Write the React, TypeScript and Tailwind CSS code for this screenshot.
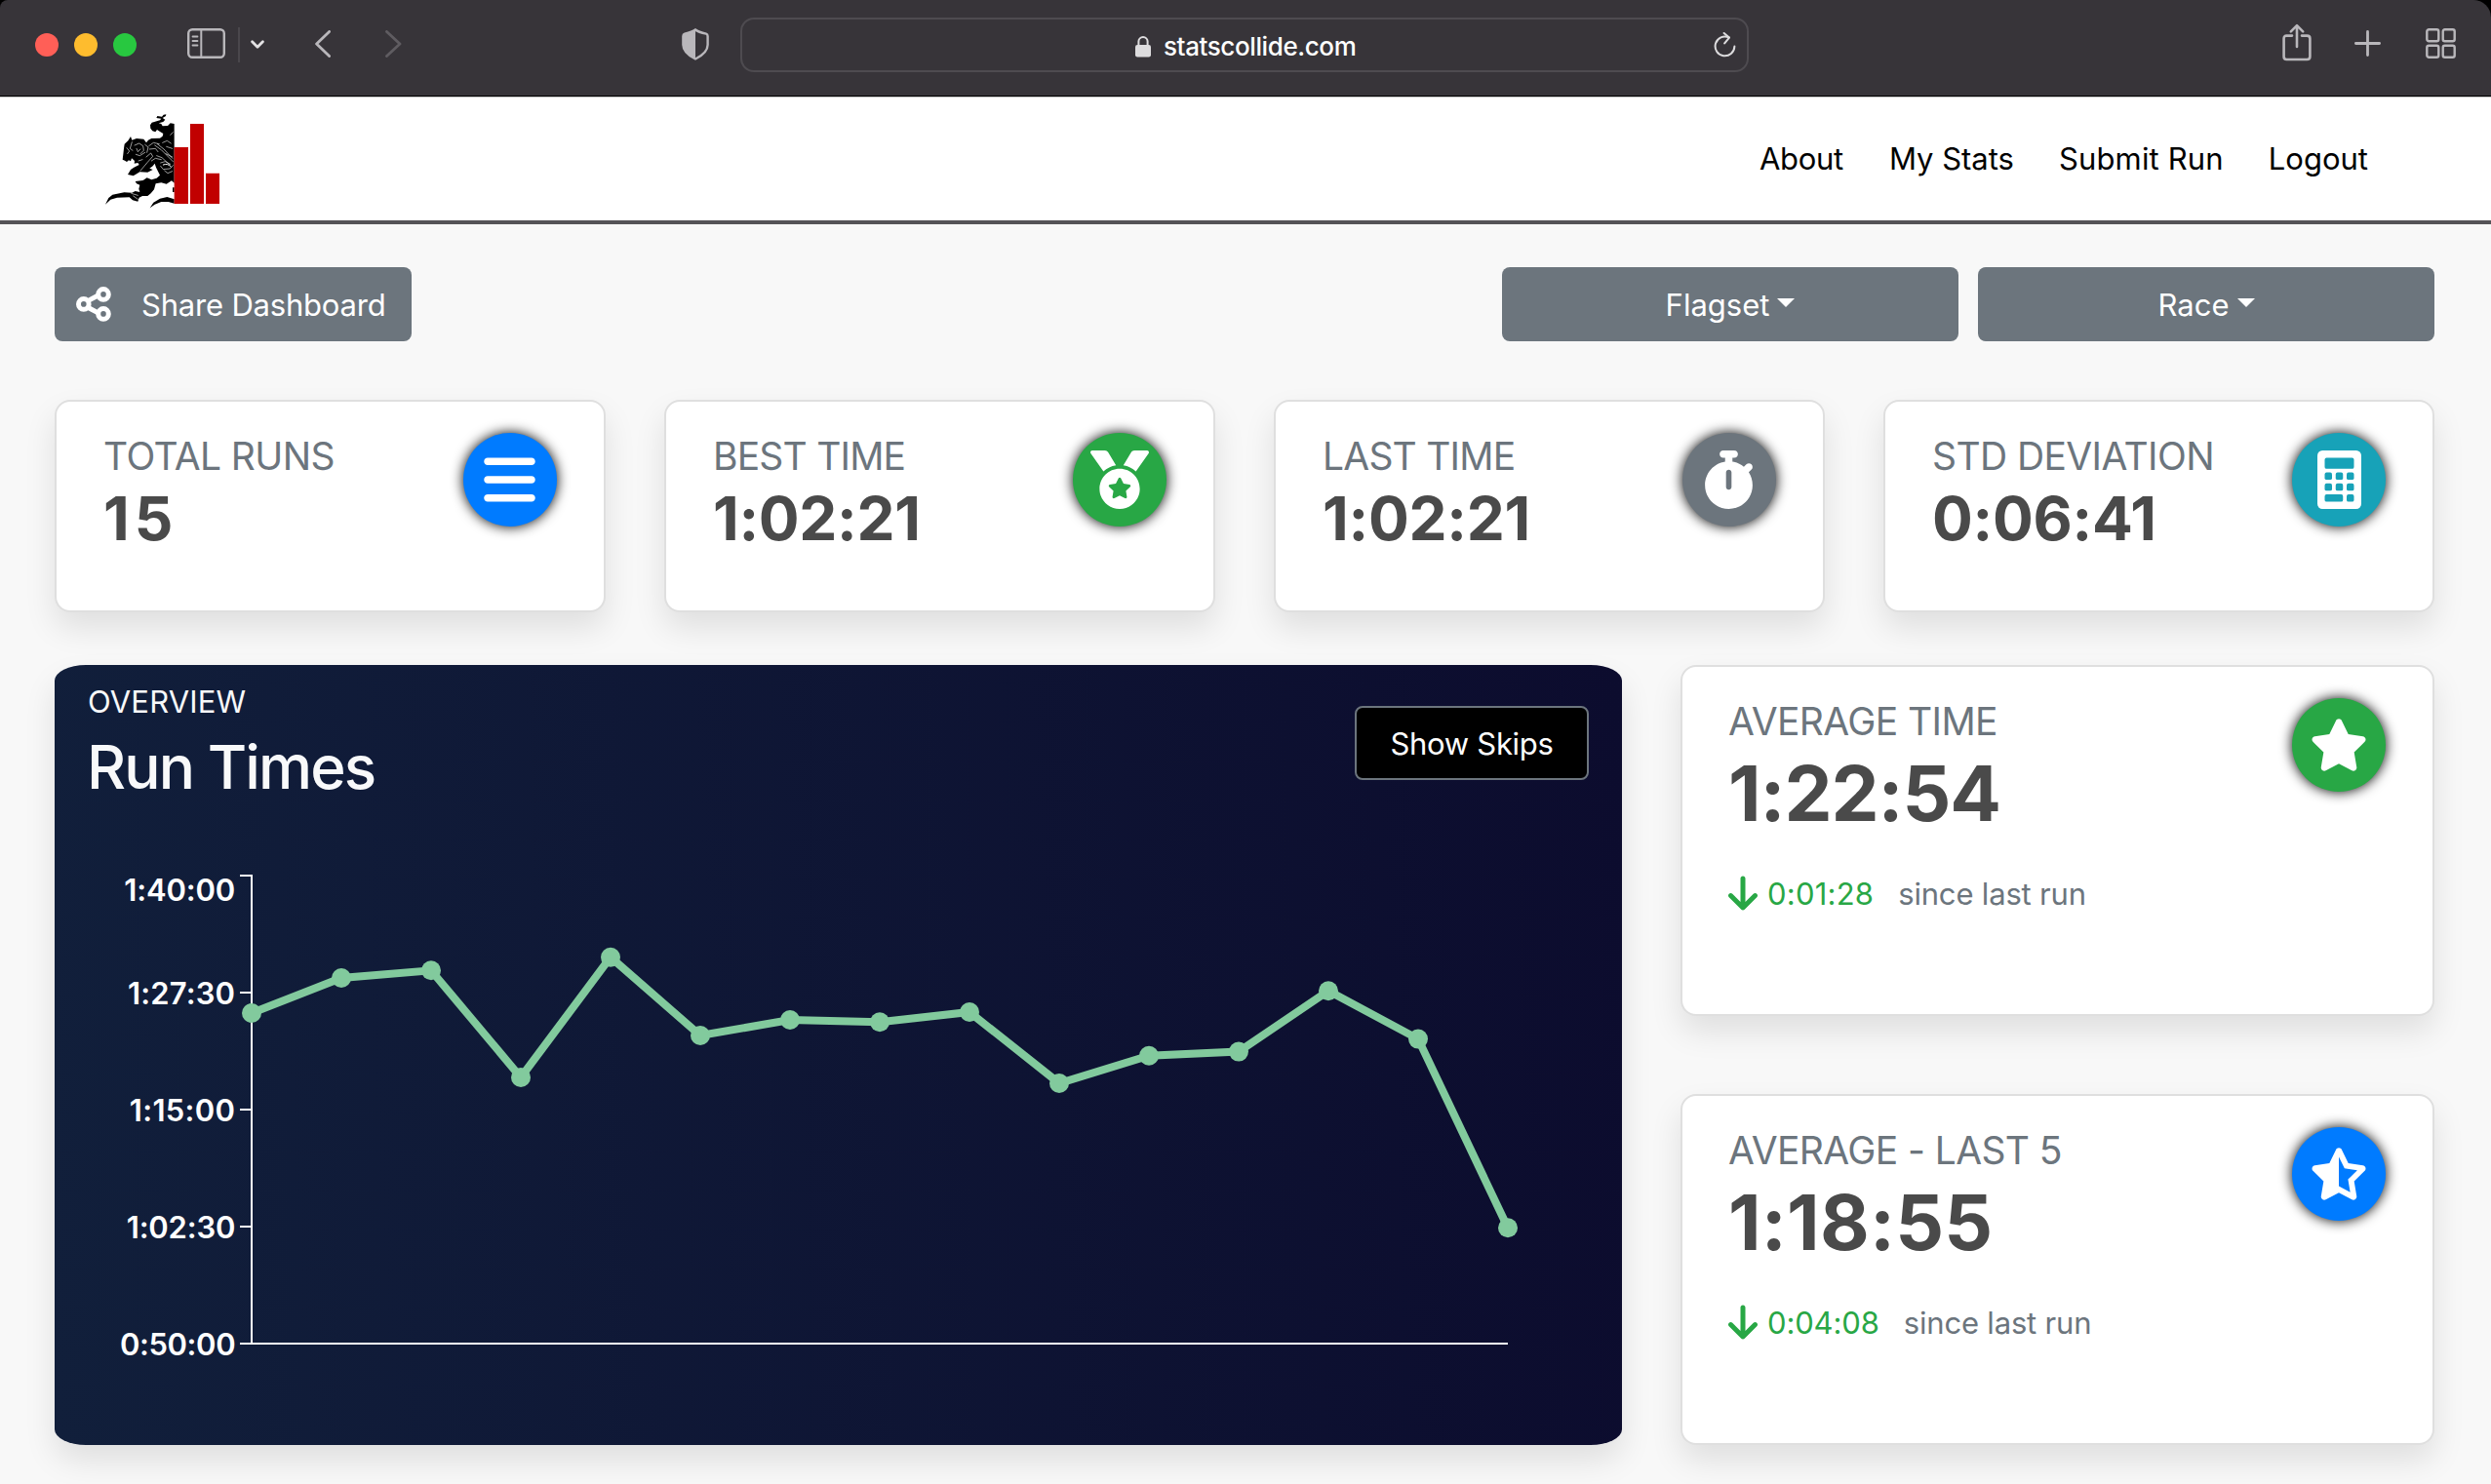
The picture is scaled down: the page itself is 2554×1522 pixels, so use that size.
import React from 'react';
import type { ReactNode } from 'react';
import { FaMedal } from 'react-icons/fa';
import { FaArrowDown, FaBars, FaStar, FaStarHalfStroke, FaStopwatch } from 'react-icons/fa6';

/* ---------- browser toolbar ---------- */

function SidebarIcon() {
  return (
    <svg className="mt-[29px] ml-[52px] h-[31px] w-[39px] shrink-0" viewBox="0 0 39 31" fill="none" stroke="#b9b7bb">
      <rect x="1.2" y="1.2" width="36.6" height="28.6" rx="4" strokeWidth="2.4" />
      <path d="M14.3 1v29" strokeWidth="2" />
      <path d="M5.5 8.5h5M5.5 13h5M5.5 17.5h5" strokeWidth="1.8" strokeLinecap="round" />
    </svg>
  );
}

function ShieldIcon() {
  return (
    <svg className="mt-[29px] ml-[287px] h-[33px] w-[28px] shrink-0" viewBox="0 0 28 33">
      <path d="M14 1.5 C17 4 22 5 25 5.6 Q26.6 6 26.6 8 V17 C26.6 24 21 28 14 31.5 C7 28 1.4 24 1.4 17 V8 Q1.4 6 3 5.6 C6 5 11 4 14 1.5Z" fill="none" stroke="#b9b7bb" strokeWidth="2.4" />
      <path d="M14 1.5 V31.5 C7 28 1.4 24 1.4 17 V8 Q1.4 6 3 5.6 C6 5 11 4 14 1.5Z" fill="#b9b7bb" />
    </svg>
  );
}

function Toolbar() {
  return (
    <div className="bg-black">
      <header className="flex h-[99px] items-start rounded-tl-[8px] rounded-tr-[18px] border-b border-black bg-[#373439]">
        <div className="mt-[34px] ml-[36px] flex shrink-0 gap-4">
          <span className="size-6 rounded-full bg-[#ff5f57]" />
          <span className="size-6 rounded-full bg-[#febc2e]" />
          <span className="size-6 rounded-full bg-[#28c840]" />
        </div>
        <SidebarIcon />
        <span className="mt-[28px] ml-[13px] h-9 w-0.5 shrink-0 bg-[#4a474c]" />
        <svg className="mt-[41px] ml-[11px] h-[9px] w-[14px] shrink-0" viewBox="0 0 14 9" fill="none" stroke="#e3e2e4" strokeWidth="2.8" strokeLinecap="round" strokeLinejoin="round">
          <path d="M1.6 1.8 7 7.2l5.4-5.4" />
        </svg>
        <svg className="mt-[31px] ml-[52px] h-[28px] w-[16px] shrink-0" viewBox="0 0 16 28" fill="none" stroke="#b9b7bb" strokeWidth="2.8" strokeLinecap="round" strokeLinejoin="round">
          <path d="M14.6 1.4 1.6 14l13 12.6" />
        </svg>
        <svg className="mt-[31px] ml-[56px] h-[28px] w-[17px] shrink-0" viewBox="0 0 17 28" fill="none" stroke="#5f5c61" strokeWidth="2.8" strokeLinecap="round" strokeLinejoin="round">
          <path d="M1.5 1.4 15 14 1.5 26.6" />
        </svg>
        <ShieldIcon />
        <div className="mt-[18px] ml-[32px] flex h-[56px] w-[1034px] shrink-0 items-start rounded-[14px] border-2 border-[#4e4b50]">
          <svg className="mt-[16px] ml-[402px] h-[23px] w-[18px] shrink-0" viewBox="0 0 18 23">
            <rect x="1" y="10" width="16" height="12.5" rx="2.2" fill="#dddcde" />
            <path d="M4.4 11V6.6a4.6 4.6 0 0 1 9.2 0V11" fill="none" stroke="#dddcde" strokeWidth="2" />
          </svg>
          <span className="mt-[12px] ml-[12px] text-[26px] leading-8 font-medium tracking-[-0.4px] text-white">statscollide.com</span>
          <svg className="mt-[13px] mr-[11px] ml-auto h-[26px] w-[23px] shrink-0" viewBox="0 0 23 26" fill="none" stroke="#dddcde" strokeWidth="2" strokeLinecap="round" strokeLinejoin="round">
            <path d="M15.6 5.4A9.9 9.9 0 1 0 21.4 14.6" />
            <path d="M10.6 1 16 5.6 11.2 11.4" />
          </svg>
        </div>
        <svg className="mt-[24px] ml-[547px] h-[39px] w-[30px] shrink-0" viewBox="0 0 30 39" fill="none" stroke="#b9b7bb" strokeWidth="2.6" strokeLinecap="round" strokeLinejoin="round">
          <path d="M10 12.6H4.4Q1.6 12.6 1.6 15.4V34Q1.6 37 4.4 37H25.4Q28.4 37 28.4 34V15.4Q28.4 12.6 25.4 12.6H20" />
          <path d="M15 24V2.6M8.8 8.4 15 2.2l6.2 6.2" />
        </svg>
        <svg className="mt-[31px] ml-[44px] h-[27px] w-[27px] shrink-0" viewBox="0 0 27 27" stroke="#b9b7bb" strokeWidth="2.8" strokeLinecap="round">
          <path d="M13.5 1.4v24.2M1.4 13.5h24.2" />
        </svg>
        <svg className="mt-[29px] ml-[46px] h-[31px] w-[31px] shrink-0" viewBox="0 0 31 31" fill="none" stroke="#b9b7bb" strokeWidth="2.4">
          <rect x="1.3" y="1.3" width="12" height="12" rx="2" />
          <rect x="17.7" y="1.3" width="12" height="12" rx="2" />
          <rect x="1.3" y="17.7" width="12" height="12" rx="2" />
          <rect x="17.7" y="17.7" width="12" height="12" rx="2" />
        </svg>
      </header>
    </div>
  );
}

/* ---------- site header ---------- */

function Logo() {
  return (
    <svg className="mt-[15px] ml-[107px] h-[100px] w-[120px]" viewBox="51 30 360 300">
      <g fill="#000">
        <path d="M241 37 L233 38 L228 44 L214 42 L211 48 L226 50 L222 55 L212 58 L197 62 L192 70 L193 80 L199 88 L208 91 L213 84 L222 90 L232 96 L230 104 L222 110 L196 111 L186 116 L180 124 L172 113 L150 111 L136 116 L132 105 L124 118 L113 128 L111 142 L109 160 L107 176 L114 179 L120 183 L126 178 L132 181 L135 172 L144 180 L143 188 L154 186 L158 192 L142 200 L132 207 L123 222 L140 226 L148 221 L160 214 L184 215 L200 207 L190 203 L200 196 L206 188 L210 200 L216 212 L222 224 L212 233 L196 238 L182 232 L170 240 L146 243 L150 250 L160 254 L157 266 L160 276 L146 273 L136 278 L112 277 L76 284 L64 294 L54 314 L70 299 L90 293 L128 292 L138 301 L154 305 L158 293 L168 288 L184 288 L194 280 L204 268 L209 250 L226 247 L242 251 L258 241 L266 248 L266 66 L254 64 L246 72 L230 73 L226 66 L218 64 L232 60 L238 53 L230 48 L240 42Z" />
        <path d="M191 325 L202 308 L222 296 L244 291 L266 298 L266 311 L248 306 L226 306 L206 314Z" />
        <path d="M261 262h5v14h-5z" />
      </g>
      <g fill="none" stroke="#fff" strokeWidth="1.8" strokeLinecap="round">
        <path d="M120 140l8 10-6 8M136 122l-6 20 8 6M144 132l14-6 12 8 2 14-10 10M148 160l12 4 16-10M150 142l4 10 8-8M176 130l10 8-4 16M188 134l14-10 18 4M190 144l18-2 8 10M206 132l20 14 36 36M214 128l20 16 26 28M180 168l14-12 6 10-16 18-22 26M196 180l12-8 18 4M212 164l16 6 24 22M224 186l14-4 16 8M224 196l8 10 20-2 10-10M236 210l10 8 14-6M230 124l14-6 12 8M242 136l18 6M168 176l-12 4M240 158l20 10M134 280l20 6M140 288l14 10M262 92l-8 8" />
        <path d="M232 192q14-6 24 6" strokeWidth="3" />
      </g>
      <g fill="#c10000">
        <path d="M266 138h43v174h-43zM315 66h42v246h-42zM363 218h42v94h-42z" />
      </g>
    </svg>
  );
}

function SiteNav() {
  return (
    <nav className="flex h-[131px] items-start border-t border-b-4 border-t-[#c4c4c4] border-b-[#555357] bg-white">
      <Logo />
      <div className="mt-[43px] mr-[126px] ml-auto flex gap-[46px] text-[31px] leading-10 text-black">
        <a className="mr-px tracking-[-0.3px]">About</a>
        <a>My Stats</a>
        <a className="tracking-[0.15px]">Submit Run</a>
        <a>Logout</a>
      </div>
    </nav>
  );
}

/* ---------- controls ---------- */

function ShareIcon() {
  return (
    <svg className="h-[36px] w-[36px] shrink-0" viewBox="0 0 36 36" fill="none" stroke="#fff">
      <path d="M12 14.6 24 8.2M12 21.2 24 27.6" strokeWidth="5" />
      <circle cx="7.8" cy="17.9" r="5.3" strokeWidth="5" />
      <circle cx="28" cy="7.9" r="5.3" strokeWidth="5" />
      <circle cx="28" cy="27.9" r="5.3" strokeWidth="5" />
    </svg>
  );
}

function Dropdown({ children }: { children: ReactNode }) {
  return (
    <button className="flex h-[76px] w-[468px] items-center justify-center gap-2 rounded-lg bg-[#6c757d] pt-0.5 text-[31px] text-white">
      {children}
      <span className="-mt-1.5 border-x-[9.5px] border-t-[9.5px] border-x-transparent border-t-white" />
    </button>
  );
}

/* ---------- cards ---------- */

function Badge({ color, children }: { color: string; children: ReactNode }) {
  return (
    <div className={`flex size-24 shrink-0 items-center justify-center rounded-full text-white shadow-[0_0_13px_#000] ${color}`}>
      {children}
    </div>
  );
}

function CalculatorIcon() {
  return (
    <svg className="h-[60px] w-[45px]" viewBox="0 0 384 512">
      <rect width="384" height="512" rx="44" fill="#fff" />
      <g fill="#17a2b8">
        <rect x="64" y="64" width="256" height="96" rx="16" />
        <rect x="64" y="192" width="64" height="64" rx="16" />
        <rect x="160" y="192" width="64" height="64" rx="16" />
        <rect x="256" y="192" width="64" height="64" rx="16" />
        <rect x="64" y="288" width="64" height="64" rx="16" />
        <rect x="160" y="288" width="64" height="64" rx="16" />
        <rect x="256" y="288" width="64" height="64" rx="16" />
        <rect x="64" y="384" width="160" height="64" rx="16" />
        <rect x="256" y="384" width="64" height="64" rx="16" />
      </g>
    </svg>
  );
}

type CardProps = {
  title: string;
  titleTracking: string;
  value: string;
  valueClass: string;
  size: string;
  badge: ReactNode;
  children?: ReactNode;
};

function Card({ title, titleTracking, value, valueClass, size, badge, children }: CardProps) {
  return (
    <section className={`flex items-start justify-between rounded-2xl border-2 border-[#dfdfdf] bg-white pt-8 pr-12 shadow-[0_16px_32px_rgba(0,0,0,0.1)] ${size}`}>
      <div>
        <h5 className={`text-[39px] leading-[48px] whitespace-nowrap text-[#6c757d] ${titleTracking}`}>{title}</h5>
        <p className={`font-bold text-[#4a4a4a] ${valueClass}`}>{value}</p>
        {children}
      </div>
      {badge}
    </section>
  );
}

function Delta({ value, tracking }: { value: string; tracking: string }) {
  return (
    <p className="mt-[32px] flex h-10 items-center text-[31px] leading-10 whitespace-nowrap">
      <FaArrowDown className="h-10 w-[30px] text-[#28a745]" />
      <span className={`mt-px ml-[10px] text-[#28a745] ${tracking}`}>{value}</span>
      <span className="mt-px ml-[25px] tracking-[-0.18px] text-[#6c757d]">since last run</span>
    </p>
  );
}

/* ---------- chart ---------- */

const points = [
  [258, 1039], [350, 1003], [442, 995.3], [534, 1105], [626, 981.7],
  [718, 1062], [810, 1046], [902, 1048.3], [994, 1038], [1086, 1111],
  [1178, 1082.7], [1270, 1078.6], [1362, 1016.2], [1454, 1065.6], [1546, 1259.3],
];

const ticks = [
  { y: 898, label: '1:40:00', baseline: 923.7, spacing: -0.12 },
  { y: 1018, label: '1:27:30', baseline: 1029.7, spacing: 0.15 },
  { y: 1138, label: '1:15:00', baseline: 1149.7, spacing: 0.28 },
  { y: 1258, label: '1:02:30', baseline: 1269.7, spacing: -0.2 },
  { y: 1378, label: '0:50:00', baseline: 1389.7, spacing: -0.4 },
];

function RunChart() {
  return (
    <svg className="h-[655px] w-[1607px]" viewBox="56 826 1607 655">
      <path d="M258 897V1379M257 1378H1546" stroke="#fff" strokeWidth="2" fill="none" />
      {ticks.map((t) => (
        <g key={t.label}>
          <path d={`M246 ${t.y}H258`} stroke="#fff" strokeWidth="2" />
          <text x="241.2" y={t.baseline} textAnchor="end" fill="#fff" fontSize="31" fontWeight="600" letterSpacing={t.spacing}>
            {t.label}
          </text>
        </g>
      ))}
      <polyline points={points.map((p) => p.join(',')).join(' ')} fill="none" stroke="#82ca9d" strokeWidth="8" />
      {points.map(([x, y]) => (
        <circle key={x} cx={x} cy={y} r="10" fill="#82ca9d" />
      ))}
    </svg>
  );
}

function RunTimes() {
  return (
    <section className="h-[800px] w-[1607px] shrink-0 rounded-[2%] bg-[linear-gradient(87deg,#111f3b,#0c0c2e)] shadow-[0_16px_32px_rgba(0,0,0,0.1)]">
      <div className="flex h-[144px] items-start justify-between px-[34px] pt-[18px]">
        <div>
          <h6 className="text-[31px] leading-10 tracking-[0.15px] text-[#f8f9fa]">OVERVIEW</h6>
          <h2 className="mt-2 -ml-px text-[62px] leading-[78px] font-medium tracking-[-1.9px] text-[#f8f9fa]">Run Times</h2>
        </div>
        <button className="mt-6 h-[76px] w-[240px] rounded-lg border-2 border-[#6c757d] bg-black pt-0.5 text-[31px] tracking-[-0.3px] text-white">
          Show Skips
        </button>
      </div>
      <RunChart />
    </section>
  );
}

export default function App() {
  return (
    <div className="h-[1522px] w-[2554px] overflow-hidden bg-[#f8f8f8] font-['Inter',sans-serif]">
      <Toolbar />
      <SiteNav />
      <main className="pt-[44px] pr-[58px] pl-[56px]">
        <div className="flex gap-5">
          <button className="mr-auto flex h-[76px] w-[366px] items-center gap-[31px] rounded-lg bg-[#6c757d] pl-[22px] text-[31px] tracking-[-0.2px] whitespace-nowrap text-white">
            <ShareIcon />
            <span className="pt-0.5">Share Dashboard</span>
          </button>
          <Dropdown>Flagset</Dropdown>
          <Dropdown>Race</Dropdown>
        </div>

        <div className="mt-[60px] grid grid-cols-4 gap-[60px]">
          <Card
            title="TOTAL RUNS"
            titleTracking="tracking-[-0.6px]"
            value="15"
            valueClass="text-[62px] leading-[79px] tracking-[5px]"
            size="h-[218px] pl-12"
            badge={<Badge color="bg-[#007bff]"><FaBars className="mr-px h-[60px] w-[53px]" /></Badge>}
          />
          <Card
            title="BEST TIME"
            titleTracking="tracking-[-0.8px]"
            value="1:02:21"
            valueClass="text-[62px] leading-[79px] tracking-[-0.3px]"
            size="h-[218px] pl-12"
            badge={<Badge color="bg-[#28a745]"><FaMedal className="size-[60px]" /></Badge>}
          />
          <Card
            title="LAST TIME"
            titleTracking="tracking-[-0.79px]"
            value="1:02:21"
            valueClass="text-[62px] leading-[79px] tracking-[-0.25px]"
            size="h-[218px] pl-12"
            badge={<Badge color="bg-[#6c757d]"><FaStopwatch className="mr-px h-[60px] w-[53px]" /></Badge>}
          />
          <Card
            title="STD DEVIATION"
            titleTracking="tracking-[-0.6px]"
            value="0:06:41"
            valueClass="text-[62px] leading-[79px] tracking-[-0.25px]"
            size="h-[218px] pl-12"
            badge={<Badge color="bg-[#17a2b8]"><CalculatorIcon /></Badge>}
          />
        </div>

        <div className="mt-[54px] flex gap-[60px]">
          <RunTimes />
          <div className="flex grow flex-col justify-between">
            <Card
              title="AVERAGE TIME"
              titleTracking="tracking-[-0.6px]"
              value="1:22:54"
              valueClass="text-[78px] leading-[100px] tracking-[-1.1px]"
              size="h-[360px] pl-[47px]"
              badge={<Badge color="bg-[#28a745]"><FaStar className="size-[60px]" /></Badge>}
            >
              <Delta value="0:01:28" tracking="tracking-[0.22px]" />
            </Card>
            <Card
              title="AVERAGE - LAST 5"
              titleTracking="tracking-[-0.6px]"
              value="1:18:55"
              valueClass="text-[78px] leading-[100px] tracking-[0.2px]"
              size="h-[360px] pl-[47px]"
              badge={<Badge color="bg-[#007bff]"><FaStarHalfStroke className="size-[60px]" /></Badge>}
            >
              <Delta value="0:04:08" tracking="tracking-[-0.14px]" />
            </Card>
          </div>
        </div>
      </main>
    </div>
  );
}
